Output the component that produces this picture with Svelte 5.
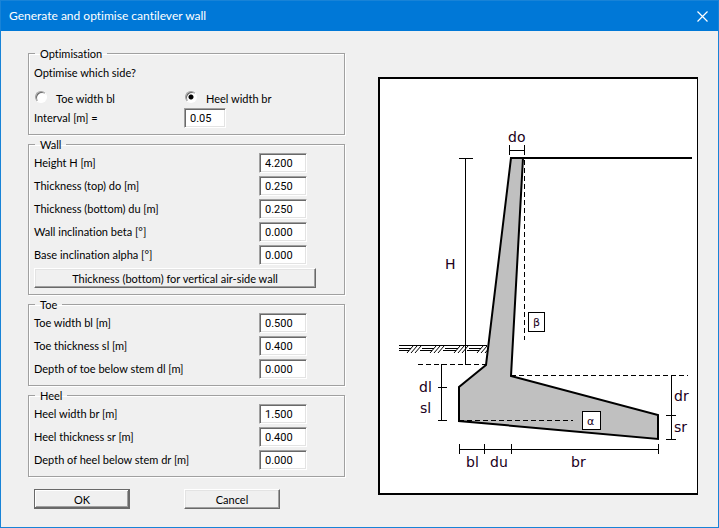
<script lang="ts">
  let side = $state('heel');
  let interval = $state('0.05');

  const groups = $state([
    {
      name: 'Wall',
      fields: [
        { id: 'H', label: 'Height H [m]', value: '4.200' },
        { id: 'do', label: 'Thickness (top) do [m]', value: '0.250' },
        { id: 'du', label: 'Thickness (bottom) du [m]', value: '0.250' },
        { id: 'beta', label: 'Wall inclination beta [°]', value: '0.000' },
        { id: 'alpha', label: 'Base inclination alpha [°]', value: '0.000' }
      ],
      action: 'Thickness (bottom) for vertical air-side wall'
    },
    {
      name: 'Toe',
      fields: [
        { id: 'bl', label: 'Toe width bl [m]', value: '0.500' },
        { id: 'sl', label: 'Toe thickness sl [m]', value: '0.400' },
        { id: 'dl', label: 'Depth of toe below stem dl [m]', value: '0.000' }
      ]
    },
    {
      name: 'Heel',
      fields: [
        { id: 'br', label: 'Heel width br [m]', value: '1.500' },
        { id: 'sr', label: 'Heel thickness sr [m]', value: '0.400' },
        { id: 'dr', label: 'Depth of heel below stem dr [m]', value: '0.000' }
      ]
    }
  ]);

  // left edge of each soil hatch mark
  const hatches = [29, 52, 76, 99];
</script>

<div class="dialog">
  <header class="titlebar">
    <h1>Generate and optimise cantilever wall</h1>
    <button class="close" type="button" aria-label="Close">
      <svg width="11" height="11" viewBox="0 0 11 11"><path d="M.5 .5L10.5 10.5M10.5 .5L.5 10.5" /></svg>
    </button>
  </header>

  <main>
    <form onsubmit={(e) => e.preventDefault()}>
      <fieldset>
        <legend>Optimisation</legend>
        <p>Optimise which side?</p>
        <div class="sides">
          <label><input type="radio" name="side" value="toe" bind:group={side} />Toe width bl</label>
          <label><input type="radio" name="side" value="heel" bind:group={side} />Heel width br</label>
        </div>
        <div class="interval">
          <label for="interval">Interval [m] =</label>
          <input id="interval" type="text" bind:value={interval} />
        </div>
      </fieldset>

      {#each groups as group}
        <fieldset>
          <legend>{group.name}</legend>
          <div class="fields">
            {#each group.fields as field}
              <div class="row">
                <label for={field.id}>{field.label}</label>
                <input id={field.id} type="text" bind:value={field.value} />
              </div>
            {/each}
          </div>
          {#if group.action}
            <button class="btn wide" type="button">{group.action}</button>
          {/if}
        </fieldset>
      {/each}

      <div class="buttons">
        <button class="btn default" type="submit">OK</button>
        <button class="btn" type="button">Cancel</button>
      </div>
    </form>

    <svg class="diagram" viewBox="0 0 320 418" role="img" aria-label="Cantilever wall dimensions">
      <rect width="320" height="418" fill="#000" />
      <rect x="2" y="2" width="317" height="414" fill="#fff" />

      <!-- ground in front of the wall -->
      <g class="thin">
        <path d="M21 268.5H109M21 271.5H33M21 273.5H31M44 271.5H56M42 273.5H54M67 271.5H80M65 273.5H78M91 271.5H103M89 273.5H101" />
        {#each hatches as x}
          <path class="hatch" d="M{x} 276l6 -7M{x + 4} 276l6 -7M{x + 8} 276l6 -7" />
        {/each}
      </g>

      <!-- wall section -->
      <path class="wall" d="M133 81H145L133 299L280 338V362L81 344V310L108 288Z" />
      <path class="surface" d="M132 81H314" />

      <g class="thin dashed">
        <path d="M146.5 83V263" />
        <path d="M40 287.5H108" />
        <path d="M81 343.5H195" />
        <path d="M133 298.5H310" />
      </g>

      <!-- dimension lines -->
      <g class="thin">
        <path d="M131.5 68V78M146.5 68V78M131 73.5H147" />
        <path d="M87.5 81V288M81 81.5H95" />
        <path d="M63.5 287V344M60 310.5H69M60 343.5H69" />
        <path d="M81 372.5H281M81.5 367V377M106.5 367V377M133.5 367V377M280.5 367V377" />
        <path d="M293.5 298V363M288 338.5H298M288 362.5H298" />
      </g>

      <rect class="tag" x="150.5" y="235.5" width="16" height="19" />
      <rect class="tag" x="204.5" y="334.5" width="18" height="18" />
      <text class="greek" x="155" y="249">β</text>
      <text class="greek" x="209" y="348">α</text>

      <text x="130" y="65">do</text>
      <text x="67" y="192">H</text>
      <text x="41" y="315">dl</text>
      <text x="42" y="336">sl</text>
      <text x="88" y="390">bl</text>
      <text x="112" y="390">du</text>
      <text x="193" y="390">br</text>
      <text x="296" y="324">dr</text>
      <text x="296" y="355">sr</text>
    </svg>
  </main>
</div>

<style>
  :global(body) {
    background: #f0f0f0;
  }

  .dialog {
    box-sizing: border-box;
    min-height: 100vh;
    border: 1px solid #1883d7;
    background: #f0f0f0;
    color: #000;
    font: 11px/13px Lato, Arial, sans-serif;
    font-variant-ligatures: none;
  }

  .titlebar {
    display: flex;
    align-items: center;
    justify-content: space-between;
    height: 30px;
    padding: 0 10px 0 8px;
    background: #0078d7;
  }

  h1 {
    margin: 0;
    color: #fff;
    font-size: 12px;
    font-weight: 400;
    line-height: 16px;
  }

  .close {
    display: flex;
    padding: 0;
    border: 0;
    background: none;
  }

  .close path {
    stroke: #fff;
    stroke-width: 1.2;
  }

  main {
    display: grid;
    grid-template-columns: 317fr 320fr;
    gap: 33px;
    align-items: start;
    padding: 16px 20px 18px 27px;
  }

  form {
    display: flex;
    flex-direction: column;
    gap: 3px;
  }

  fieldset {
    min-width: 0;
    margin: 0;
    padding: 2px 28px 6px 5px;
    border: 1px solid #a0a0a0;
    box-shadow: 1px 1px 0 #fff, inset 1px 1px 0 #fff;
  }

  legend {
    margin-left: 1px;
    padding: 0 5px;
  }

  p {
    margin: 4px 0 10px;
  }

  label {
    white-space: nowrap;
  }

  .sides {
    display: grid;
    grid-template-columns: 150px 1fr;
    height: 19px;
  }

  .sides label {
    display: flex;
    align-items: center;
    gap: 9px;
  }

  input[type="radio"] {
    appearance: none;
    box-sizing: border-box;
    width: 12px;
    height: 12px;
    margin: 0 0 3px 1px;
    border: 1px solid;
    border-color: #a0a0a0 #fff #fff #a0a0a0;
    border-radius: 50%;
    background: #fff;
    box-shadow: inset 1px 1px 0 #696969;
  }

  input[type="radio"]:checked {
    background: radial-gradient(circle, #000 2px, #fff 3px);
  }

  input[type="text"] {
    box-sizing: border-box;
    width: 48px;
    height: 20px;
    padding: 1px 5px 0;
    border: 1px solid;
    border-color: #a0a0a0 #fff #fff #a0a0a0;
    border-radius: 0;
    background: #fff;
    box-shadow: inset 1px 1px 0 #696969, inset -1px -1px 0 #e3e3e3;
    color: #000;
    font: 11px/13px Roboto, Arial, sans-serif;
  }

  .interval {
    display: grid;
    grid-template-columns: 150px 42px;
  }

  .interval label {
    padding-top: 3px;
  }

  .interval input[type="text"] {
    width: 100%;
  }

  .fields {
    display: flex;
    flex-direction: column;
    gap: 3px;
    padding-right: 9px;
  }

  .row {
    display: flex;
    justify-content: space-between;
  }

  .row label {
    padding-top: 3px;
  }

  .btn {
    box-sizing: border-box;
    width: 96px;
    height: 20px;
    padding: 0;
    border: 1px solid;
    border-color: #fff #696969 #696969 #fff;
    border-radius: 0;
    background: #f0f0f0;
    box-shadow: inset -1px -1px 0 #a0a0a0, inset 1px 1px 0 #e3e3e3;
    color: #000;
    font: inherit;
  }

  .btn.wide {
    width: 100%;
    margin-top: 3px;
  }

  .btn.default {
    border-color: #696969;
    box-shadow: inset -1px -1px 0 #696969, inset 1px 1px 0 #fff, inset -2px -2px 0 #a0a0a0;
  }

  .buttons {
    display: flex;
    gap: 54px;
    padding: 9px 0 0 6px;
  }

  .diagram {
    display: block;
    width: 100%;
    margin-top: 30px;
  }

  .thin {
    fill: none;
    stroke: #000;
    stroke-width: 1;
    shape-rendering: crispEdges;
  }

  .dashed {
    stroke-dasharray: 5 3;
  }

  .hatch {
    shape-rendering: auto;
  }

  .wall {
    fill: #c0c0c0;
    stroke: #000;
    stroke-width: 2;
  }

  .surface {
    stroke: #000;
    stroke-width: 2;
  }

  .tag {
    fill: #fff;
    stroke: #000;
  }

  text {
    fill: #200020;
    font: 14px "DejaVu Sans", Verdana, sans-serif;
  }

  .greek {
    font-size: 11px;
  }
</style>
